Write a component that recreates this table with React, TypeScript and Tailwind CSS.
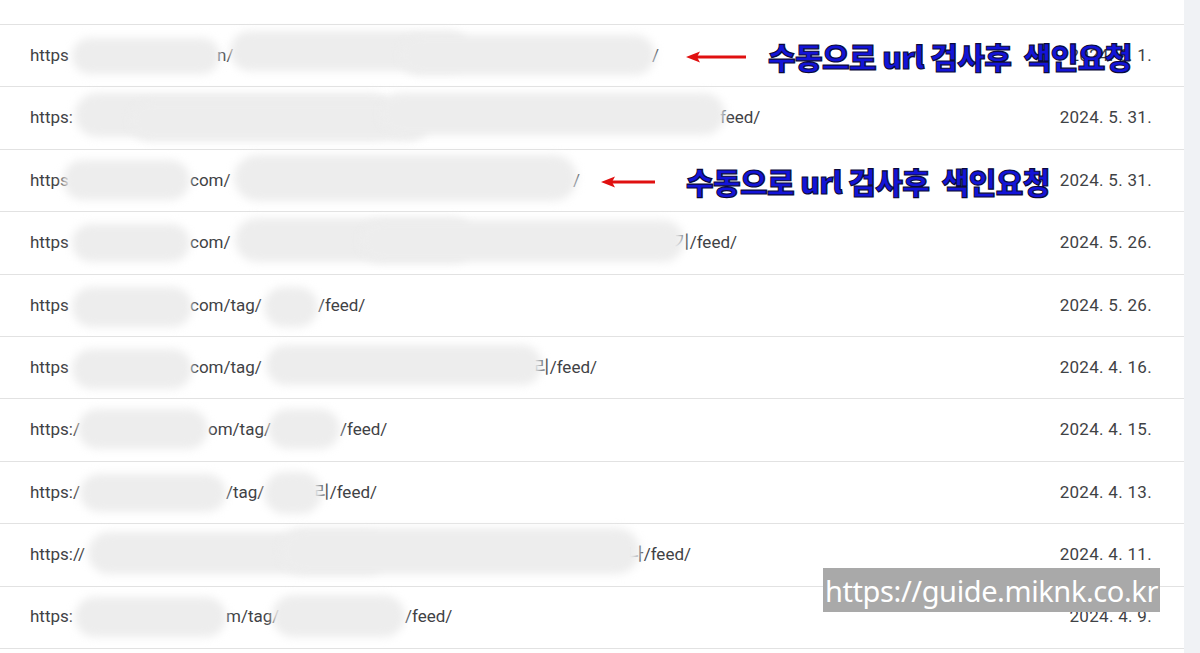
import React from 'react';

type Seg = { x: number; t: string };
type Blob = { l: number; w: number; top: number; h: number };
type Row = { segs: Seg[]; end: number; blobs: Blob[]; date: string };

const rows: Row[] = [
  {
    segs: [{ x: 30, t: 'https' }, { x: 217, t: 'n/' }, { x: 652, t: '/' }],
    end: 670,
    blobs: [
      { l: 72, w: 148, top: 13, h: 36 },
      { l: 230, w: 240, top: 6, h: 40 },
      { l: 400, w: 255, top: 10, h: 40 },
    ],
    date: '2024. 6. 1.',
  },
  {
    segs: [{ x: 30, t: 'https:' }, { x: 720, t: 'feed/' }],
    end: 780,
    blobs: [
      { l: 75, w: 320, top: 6, h: 44 },
      { l: 130, w: 300, top: 14, h: 40 },
      { l: 380, w: 345, top: 6, h: 42 },
    ],
    date: '2024. 5. 31.',
  },
  {
    segs: [{ x: 30, t: 'https' }, { x: 190, t: 'com/' }, { x: 573, t: '/' }],
    end: 590,
    blobs: [
      { l: 63, w: 127, top: 10, h: 40 },
      { l: 234, w: 343, top: 5, h: 46 },
    ],
    date: '2024. 5. 31.',
  },
  {
    segs: [{ x: 30, t: 'https' }, { x: 190, t: 'com/' }, { x: 674, t: '기/feed/' }],
    end: 760,
    blobs: [
      { l: 72, w: 118, top: 12, h: 38 },
      { l: 235, w: 240, top: 6, h: 44 },
      { l: 360, w: 324, top: 8, h: 42 },
    ],
    date: '2024. 5. 26.',
  },
  {
    segs: [{ x: 30, t: 'https' }, { x: 190, t: 'com/tag/' }, { x: 318, t: '/feed/' }],
    end: 400,
    blobs: [
      { l: 72, w: 120, top: 12, h: 40 },
      { l: 264, w: 54, top: 12, h: 40 },
    ],
    date: '2024. 5. 26.',
  },
  {
    segs: [{ x: 30, t: 'https' }, { x: 190, t: 'com/tag/' }, { x: 534, t: '리/feed/' }],
    end: 620,
    blobs: [
      { l: 72, w: 120, top: 12, h: 40 },
      { l: 266, w: 276, top: 8, h: 40 },
    ],
    date: '2024. 4. 16.',
  },
  {
    segs: [{ x: 30, t: 'https:/' }, { x: 208, t: 'om/tag/' }, { x: 340, t: '/feed/' }],
    end: 420,
    blobs: [
      { l: 78, w: 130, top: 10, h: 40 },
      { l: 268, w: 72, top: 10, h: 40 },
    ],
    date: '2024. 4. 15.',
  },
  {
    segs: [{ x: 30, t: 'https:/' }, { x: 226, t: '/tag/' }, { x: 314, t: '리/feed/' }],
    end: 400,
    blobs: [
      { l: 80, w: 146, top: 12, h: 38 },
      { l: 264, w: 58, top: 10, h: 42 },
    ],
    date: '2024. 4. 13.',
  },
  {
    segs: [{ x: 30, t: 'https://' }, { x: 628, t: '나/feed/' }],
    end: 710,
    blobs: [
      { l: 88, w: 300, top: 8, h: 42 },
      { l: 280, w: 360, top: 4, h: 46 },
    ],
    date: '2024. 4. 11.',
  },
  {
    segs: [{ x: 30, t: 'https:' }, { x: 226, t: 'm/tag/' }, { x: 405, t: '/feed/' }],
    end: 470,
    blobs: [
      { l: 75, w: 151, top: 10, h: 40 },
      { l: 272, w: 133, top: 8, h: 42 },
    ],
    date: '2024. 4. 9.',
  },
];

const Arrow = ({ w }: { w: number }) => (
  <svg width={w} height="14" viewBox={`0 0 ${w} 14`}>
    <line x1="10" y1="7" x2={w} y2="7" stroke="#e01010" strokeWidth="3" />
    <polygon points="0,7 14,1.5 11,7 14,12.5" fill="#e01010" />
  </svg>
);

const Note = ({ left, arrowLeft, arrowW }: { left: number; arrowLeft: number; arrowW: number }) => (
  <>
    <div className="absolute top-[25px]" style={{ left: arrowLeft }}>
      <Arrow w={arrowW} />
    </div>
    <div
      className="absolute top-[12px] whitespace-pre text-[30px] leading-[38px] font-black tracking-[-0.6px] text-[#1414d8] [-webkit-text-stroke:1.2px_#0a0a3c]"
      style={{ left, fontFamily: '"Noto Sans CJK KR", "Noto Sans", sans-serif' }}
    >
      수동으로 url 검사후  색인요청
    </div>
  </>
);

export default function App() {
  return (
    <div className="flex h-[653px] w-[1200px] overflow-hidden bg-white" style={{ fontFamily: 'Roboto, "Noto Sans CJK KR", sans-serif' }}>
      <div className="relative w-[1184px] shrink-0 bg-white pt-[24px]">
        <div className="border-t border-[#e2e2e2]">
          {rows.map((r, i) => (
            <div key={i} className="relative flex h-[62.4px] items-center border-b border-[#e2e2e2] pr-[32px] text-[17px] text-[#3f4245]">
              <div className="flex">
                {r.segs.map((s, j) => {
                  const next = j + 1 < r.segs.length ? r.segs[j + 1].x : r.end;
                  return (
                    <div key={j} className="shrink-0 whitespace-nowrap" style={{ width: next - s.x, marginLeft: j === 0 ? s.x : 0 }}>
                      {s.t}
                    </div>
                  );
                })}
              </div>
              <div className="ml-auto whitespace-nowrap tracking-[0.3px]">{r.date}</div>
              {r.blobs.map((b, k) => (
                <div
                  key={k}
                  className="absolute rounded-full bg-[#ededed] blur-[4px]"
                  style={{ left: b.l, width: b.w, top: b.top, height: b.h }}
                />
              ))}
              {i === 0 && <Note left={768} arrowLeft={686} arrowW={60} />}
              {i === 2 && <Note left={686} arrowLeft={601} arrowW={54} />}
            </div>
          ))}
        </div>
        <div
          className="absolute left-[823px] top-[568px] flex h-[44px] w-[337px] items-center justify-center overflow-hidden whitespace-nowrap bg-[#a9a9a9] text-[29px] leading-none tracking-[-0.4px] text-white"
          style={{ fontFamily: '"Noto Sans", sans-serif' }}
        >
          https://guide.miknk.co.kr
        </div>
      </div>
      <div className="flex-1 bg-[#f0f2f5]" />
    </div>
  );
}
